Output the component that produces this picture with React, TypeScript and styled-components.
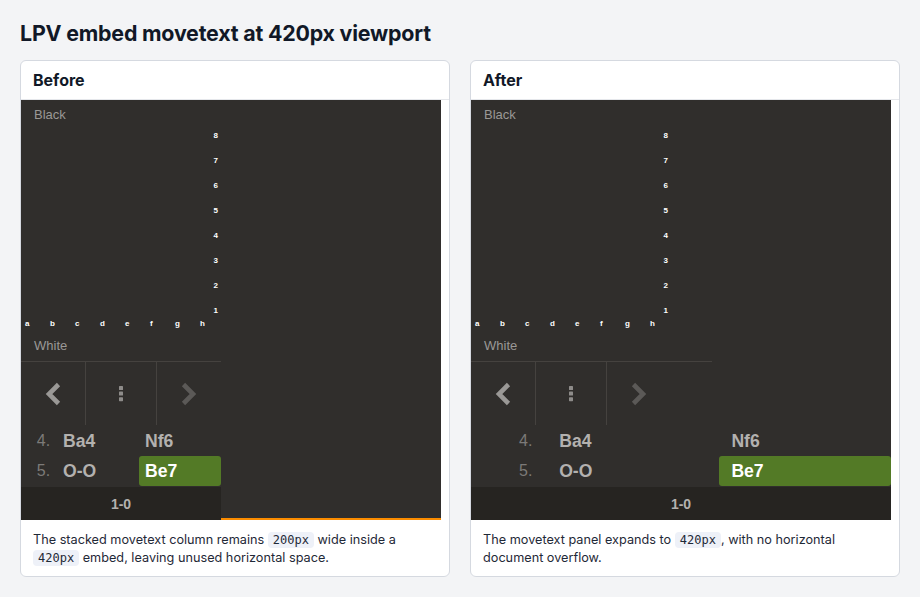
import React from 'react';
import styled, { createGlobalStyle } from 'styled-components';

const Global = createGlobalStyle`
  html, body { margin: 0; padding: 0; background: #f3f4f6; }
  body { font-family: Inter, "Noto Sans", sans-serif; }
  *, *::before, *::after { box-sizing: border-box; }
`;

const Page = styled.div`
  padding: 20px 20px 0;
`;

const Title = styled.h1`
  margin: 0 0 13px;
  font-size: 21.4px;
  line-height: 27px;
  font-weight: 700;
  color: #111827;
  letter-spacing: -0.2px;
`;

const Columns = styled.div`
  display: grid;
  grid-template-columns: 1fr 1fr;
  gap: 20px;
  align-items: start;
`;

const Card = styled.section`
  background: #fff;
  border: 1px solid #d5d9e0;
  border-radius: 6px;
  overflow: hidden;
`;

const CardHeader = styled.h2`
  margin: 0;
  padding: 10px 12px 9px;
  font-size: 16px;
  line-height: 19px;
  font-weight: 700;
  color: #111827;
  border-bottom: 1px solid #e5e7eb;
`;

const Caption = styled.p`
  margin: 0;
  padding: 11px 12px 9px;
  font-size: 12.7px;
  line-height: 18px;
  color: #1f2937;
`;

const Code = styled.code`
  font-family: "DejaVu Sans Mono", "Liberation Mono", monospace;
  font-size: 12px;
  background: #eef1f8;
  border-radius: 4px;
  padding: 1px 5px;
  color: #1f2937;
`;

/* ---------- LPV embed ---------- */

const EmbedBefore = styled.div`
  width: 420px;
  height: 420px;
  background: #302e2c;
  font-family: "Liberation Sans", Arial, sans-serif;
  display: grid;
  grid-template-columns: 200px 1fr;
`;

const EmbedAfter = styled.div`
  width: 420px;
  height: 420px;
  background: #302e2c;
  font-family: "Liberation Sans", Arial, sans-serif;
  display: flex;
  flex-direction: column;
`;

const TopRow = styled.div`
  display: flex;
`;

const Side = styled.div<{ $w: number }>`
  width: ${(p) => p.$w}px;
  display: flex;
  flex-direction: column;
`;

const OverflowFiller = styled.div`
  border-bottom: 2px solid #fb8c00;
`;

const Player = styled.div<{ $h: number }>`
  height: ${(p) => p.$h}px;
  display: flex;
  align-items: center;
  padding-left: 13px;
  font-size: 13px;
  color: #9a9896;
`;

const Board = styled.div`
  width: 200px;
  height: 200px;
  display: grid;
  grid-template-columns: repeat(8, 25px);
  grid-template-rows: repeat(8, 25px);
`;

const Square = styled.div`
  display: flex;
  flex-direction: column;
  justify-content: space-between;
  padding: 3px 3px 1px 4px;
  font-size: 8px;
  line-height: 8px;
  font-weight: 700;
  color: #fff;
`;

const RankLabel = styled.span`
  align-self: flex-end;
`;

const FileLabel = styled.span`
  align-self: flex-start;
  margin-top: auto;
`;

const Controls = styled.div`
  display: flex;
  height: 64px;
  border-top: 1px solid #45423f;
`;

const NavBtn = styled.div<{ $w: number; $sep?: boolean }>`
  width: ${(p) => p.$w}px;
  display: flex;
  align-items: center;
  justify-content: center;
  border-left: ${(p) => (p.$sep ? '1px solid #45423f' : 'none')};
`;

const Moves = styled.div`
  display: flex;
  flex-wrap: wrap;
  padding: 1px 0;
  height: 62px;
`;

const Index = styled.span`
  flex: 0 0 18%;
  text-align: right;
  padding-right: 3.4%;
  font-size: 16px;
  line-height: 30px;
  color: #7c7a78;
`;

const Move = styled.span<{ $active?: boolean }>`
  flex: 0 0 41%;
  padding-left: 3%;
  font-size: 17.6px;
  line-height: 30px;
  font-weight: 700;
  border-radius: 3px;
  color: ${(p) => (p.$active ? '#ffffff' : '#b3b1af')};
  background: ${(p) => (p.$active ? '#537a26' : 'transparent')};
`;

const Result = styled.div`
  height: 33px;
  background: #262421;
  display: flex;
  align-items: center;
  justify-content: center;
  font-size: 14px;
  font-weight: 700;
  color: #b3b1af;
`;

const files = ['a', 'b', 'c', 'd', 'e', 'f', 'g', 'h'];

const moves = [
  { n: 4, w: 'Ba4', b: 'Nf6', active: false },
  { n: 5, w: 'O-O', b: 'Be7', active: true },
];

function Chevron({ dir, color }: { dir: 'left' | 'right'; color: string }) {
  const pts = dir === 'left' ? '13.5,2.5 4,12 13.5,21.5' : '2.5,2.5 12,12 2.5,21.5';
  return (
    <svg width="16" height="24" viewBox="0 0 16 24">
      <polyline points={pts} fill="none" stroke={color} strokeWidth="4.6" strokeLinejoin="miter" />
    </svg>
  );
}

function Dots() {
  return (
    <svg width="4" height="16" viewBox="0 0 4 16">
      <rect x="0" y="0" width="4" height="4" rx="0.6" fill="#8e8c8a" />
      <rect x="0" y="5.6" width="4" height="4" rx="0.6" fill="#8e8c8a" />
      <rect x="0" y="11.2" width="4" height="4" rx="0.6" fill="#8e8c8a" />
    </svg>
  );
}

function BoardView() {
  const squares = [];
  for (let r = 8; r >= 1; r--) {
    for (let f = 0; f < 8; f++) {
      squares.push(
        <Square key={`${f}${r}`}>
          {f === 7 ? <RankLabel>{r}</RankLabel> : null}
          {r === 1 ? <FileLabel>{files[f]}</FileLabel> : null}
        </Square>
      );
    }
  }
  return <Board>{squares}</Board>;
}

function ControlBar() {
  return (
    <Controls>
      <NavBtn $w={64}>
        <Chevron dir="left" color="#9a9896" />
      </NavBtn>
      <NavBtn $w={71} $sep>
        <Dots />
      </NavBtn>
      <NavBtn $w={65} $sep>
        <Chevron dir="right" color="#5b5957" />
      </NavBtn>
    </Controls>
  );
}

function MoveList() {
  return (
    <Moves>
      {moves.map((m) => (
        <React.Fragment key={m.n}>
          <Index>{m.n}.</Index>
          <Move>{m.w}</Move>
          <Move $active={m.active}>{m.b}</Move>
        </React.Fragment>
      ))}
    </Moves>
  );
}

function BoardSide() {
  return (
    <>
      <Player $h={29}>Black</Player>
      <BoardView />
      <Player $h={32}>White</Player>
      <ControlBar />
    </>
  );
}

function Before() {
  return (
    <EmbedBefore>
      <Side $w={200}>
        <BoardSide />
        <MoveList />
        <Result>1-0</Result>
      </Side>
      <OverflowFiller />
    </EmbedBefore>
  );
}

function After() {
  return (
    <EmbedAfter>
      <TopRow>
        <Side $w={241}>
          <BoardSide />
        </Side>
      </TopRow>
      <MoveList />
      <Result>1-0</Result>
    </EmbedAfter>
  );
}

export default function App() {
  return (
    <>
      <Global />
      <Page>
        <Title>LPV embed movetext at 420px viewport</Title>
        <Columns>
          <Card>
            <CardHeader>Before</CardHeader>
            <Before />
            <Caption>
              The stacked movetext column remains <Code>200px</Code> wide inside a{' '}
              <Code>420px</Code> embed, leaving unused horizontal space.
            </Caption>
          </Card>
          <Card>
            <CardHeader>After</CardHeader>
            <After />
            <Caption>
              The movetext panel expands to <Code>420px</Code>, with no horizontal document
              overflow.
            </Caption>
          </Card>
        </Columns>
      </Page>
    </>
  );
}
